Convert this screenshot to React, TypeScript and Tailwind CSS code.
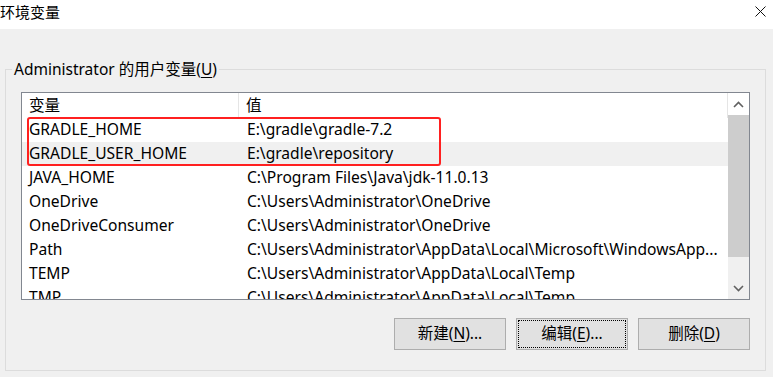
const rows = [
  { name: "GRADLE_HOME", value: "E:\\gradle\\gradle-7.2" },
  { name: "GRADLE_USER_HOME", value: "E:\\gradle\\repository", hover: true },
  { name: "JAVA_HOME", value: "C:\\Program Files\\Java\\jdk-11.0.13" },
  { name: "OneDrive", value: "C:\\Users\\Administrator\\OneDrive" },
  { name: "OneDriveConsumer", value: "C:\\Users\\Administrator\\OneDrive" },
  { name: "Path", value: "C:\\Users\\Administrator\\AppData\\Local\\Microsoft\\WindowsApp..." },
  { name: "TEMP", value: "C:\\Users\\Administrator\\AppData\\Local\\Temp" },
  { name: "TMP", value: "C:\\Users\\Administrator\\AppData\\Local\\Temp" },
];

const Chevron = ({ up }: { up?: boolean }) => (
  <svg width="11" height="7" viewBox="0 0 11 7" className={up ? "" : "rotate-180"}>
    <path d="M1 6 L5.5 1.5 L10 6" fill="none" stroke="#606060" strokeWidth="1.6" />
  </svg>
);

const Btn = ({ label, k, dots, focused }: { label: string; k: string; dots?: boolean; focused?: boolean }) => (
  <button
    className={`w-[112px] h-[32px] bg-[#e1e1e1] border border-[#adadad] text-[15.5px] text-black flex items-center justify-center ${
      focused ? "outline-dotted outline-1 outline-black outline-offset-[-3px]" : ""
    }`}
  >
    {label}(<span className="underline underline-offset-2">{k}</span>){dots ? "..." : ""}
  </button>
);

export default function App() {
  return (
    <div
      className="w-[773px] h-[377px] bg-[#f0f0f0] overflow-hidden text-black"
      style={{ fontFamily: '"Noto Sans", "Noto Sans CJK SC", sans-serif' }}
    >
      {/* title bar */}
      <div className="h-[29px] bg-white flex items-center justify-between">
        <span className="text-[15px] leading-none -mt-[5px]">环境变量</span>
        <svg width="11" height="11" viewBox="0 0 11 11" className="mr-[7px] -mt-[7px]">
          <path d="M0.5 0.5 L10.5 10.5 M10.5 0.5 L0.5 10.5" stroke="#111" strokeWidth="1" />
        </svg>
      </div>

      <fieldset className="mt-[30px] ml-[5px] mr-[7px] border border-[#dcdcdc]">
        <legend className="ml-[6px] px-[2px] text-[15.5px] leading-[20px]">
          Administrator 的用户变量(<span className="underline underline-offset-2">U</span>)
        </legend>

        <div className="px-[15px] pt-[13px] pb-[20px]">
          {/* list view */}
          <div className="h-[208px] border border-[#828790] bg-white flex">
            <div className="flex-1 relative overflow-hidden text-[15.6px]">
              <div className="h-[25px] flex items-center border-r border-[#e5e5e5]">
                <div className="w-[217px] h-full flex items-center pl-[7px] border-r border-[#e5e5e5]">变量</div>
                <div className="flex-1 pl-[7px]">值</div>
              </div>
              {rows.map((r) => (
                <div key={r.name} className={`h-[24px] flex items-center ${r.hover ? "bg-[#f0f0f0]" : ""}`}>
                  <div className="w-[218px] pl-[7px] whitespace-nowrap">{r.name}</div>
                  <div className="flex-1 pl-[7px] whitespace-nowrap overflow-hidden">{r.value}</div>
                </div>
              ))}
              {/* red highlight box */}
              <div className="absolute left-[5px] top-[24px] w-[414px] h-[49px] border-2 border-[#ff2020] rounded-[3px]" />
            </div>

            {/* scrollbar */}
            <div className="w-[21px] flex flex-col">
              <div className="h-[22px] bg-white flex items-center justify-center">
                <Chevron up />
              </div>
              <div className="h-[142px] bg-[#cdcdcd]" />
              <div className="flex-1 bg-[#f0f0f0]" />
              <div className="h-[22px] bg-[#f0f0f0] flex items-center justify-center">
                <Chevron />
              </div>
            </div>
          </div>

          {/* buttons */}
          <div className="mt-[18px] flex justify-end gap-[10px]">
            <Btn label="新建" k="N" dots />
            <Btn label="编辑" k="E" dots focused />
            <Btn label="删除" k="D" />
          </div>
        </div>
      </fieldset>
    </div>
  );
}
